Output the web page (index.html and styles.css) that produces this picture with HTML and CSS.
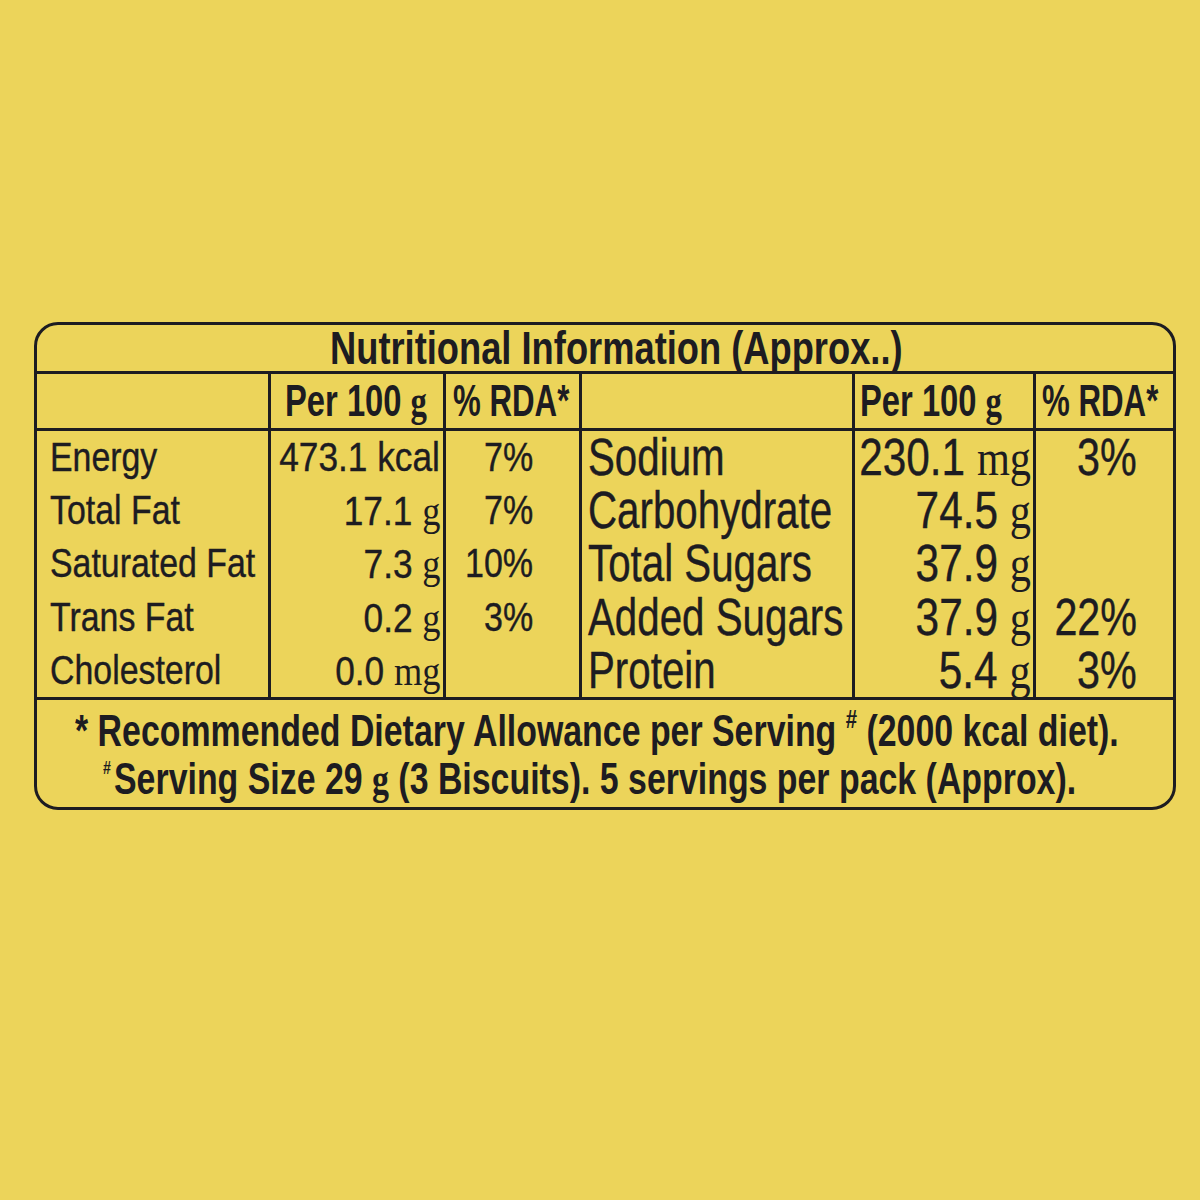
FILE: index.html
```html
<!DOCTYPE html>
<html lang="en">
<head>
<meta charset="utf-8">
<title>Nutritional Information</title>
<link rel="stylesheet" href="styles.css">
</head>
<body>
<div class="page">
  <div class="label">
    <div class="title"><span class="sx tt">Nutritional Information (Approx..)</span></div>
    <div class="grid">
      <div class="h c1"></div>
      <div class="h c2"><span class="sx hp">Per 100 <span class="u">g</span></span></div>
      <div class="h c3"><span class="sx hr">% RDA*</span></div>
      <div class="h c4"></div>
      <div class="h c5"><span class="sx hp">Per 100 <span class="u">g</span></span></div>
      <div class="h c6"><span class="sx hr">% RDA*</span></div>

      <div class="d L c1"><span class="sx">Energy</span></div>
      <div class="d L c2 num"><span class="sx">473.1 kcal</span></div>
      <div class="d L c3 num"><span class="sx">7%</span></div>
      <div class="d R c4"><span class="sx">Sodium</span></div>
      <div class="d R c5 num"><span class="sx">230.1 <span class="u">mg</span></span></div>
      <div class="d R c6 num"><span class="sx">3%</span></div>

      <div class="d L c1"><span class="sx">Total Fat</span></div>
      <div class="d L c2 num"><span class="sx">17.1 <span class="u">g</span></span></div>
      <div class="d L c3 num"><span class="sx">7%</span></div>
      <div class="d R c4"><span class="sx">Carbohydrate</span></div>
      <div class="d R c5 num"><span class="sx">74.5 <span class="u">g</span></span></div>
      <div class="d R c6 num"></div>

      <div class="d L c1"><span class="sx">Saturated Fat</span></div>
      <div class="d L c2 num"><span class="sx">7.3 <span class="u">g</span></span></div>
      <div class="d L c3 num"><span class="sx">10%</span></div>
      <div class="d R c4"><span class="sx">Total Sugars</span></div>
      <div class="d R c5 num"><span class="sx">37.9 <span class="u">g</span></span></div>
      <div class="d R c6 num"></div>

      <div class="d L c1"><span class="sx">Trans Fat</span></div>
      <div class="d L c2 num"><span class="sx">0.2 <span class="u">g</span></span></div>
      <div class="d L c3 num"><span class="sx">3%</span></div>
      <div class="d R c4"><span class="sx">Added Sugars</span></div>
      <div class="d R c5 num"><span class="sx">37.9 <span class="u">g</span></span></div>
      <div class="d R c6 num"><span class="sx">22%</span></div>

      <div class="d L c1"><span class="sx">Cholesterol</span></div>
      <div class="d L c2 num"><span class="sx">0.0 <span class="u">mg</span></span></div>
      <div class="d L c3 num"></div>
      <div class="d R c4"><span class="sx">Protein</span></div>
      <div class="d R c5 num"><span class="sx">5.4 <span class="u">g</span></span></div>
      <div class="d R c6 num"><span class="sx">3%</span></div>
    </div>
    <div class="foot">
      <div class="fl l1"><span class="sx ft">* Recommended Dietary Allowance per Serving <span class="hash">#</span> (2000 kcal diet).</span></div>
      <div class="fl l2"><span class="sx ft"><span class="hash lead">#</span>Serving Size 29 <span class="u">g</span> (3 Biscuits). 5 servings per pack (Approx).</span></div>
    </div>
  </div>
</div>
</body>
</html>
```

FILE: styles.css
```css
html, body {
  margin: 0;
  padding: 0;
}

body {
  width: 1200px;
  height: 1200px;
  background: #ecd45a;
  color: #1d1c21;
  font-family: "Liberation Sans", Arial, sans-serif;
}

.page {
  padding: 322px 0 0 34px;
}

.label {
  width: 1142px;
  height: 488px;
  box-sizing: border-box;
  border: 3px solid #1d1c21;
  border-radius: 24px;
  overflow: hidden;
  display: flex;
  flex-direction: column;
}

.sx {
  display: inline-block;
  white-space: nowrap;
  transform-origin: left center;
}

.u {
  font-family: "Liberation Serif", "Times New Roman", serif;
}

/* title */
.title {
  height: 49px;
  box-sizing: border-box;
  border-bottom: 3px solid #1d1c21;
  display: flex;
  padding-left: 293px;
  font-size: 46px;
  line-height: 46px;
  font-weight: bold;
}

.tt {
  transform: scaleX(0.789);
}

/* grid */
.grid {
  display: grid;
  grid-template-columns: 234px 175px 136px 273px 181px 137px;
  grid-template-rows: 57px repeat(5, 53.2px);
}

.grid > div {
  box-sizing: border-box;
  display: flex;
  white-space: nowrap;
  min-width: 0;
}

.c1, .c2, .c3, .c4, .c5 {
  border-right: 3px solid #1d1c21;
}

.h {
  border-bottom: 3px solid #1d1c21;
  font-size: 44px;
  line-height: 54px;
  font-weight: bold;
}

.h .u {
  font-weight: bold;
}

.h.c2 { padding-left: 14px; }
.h.c3 { padding-left: 7px; }
.h.c5 { padding-left: 5px; }
.h.c6 { padding-left: 6px; }

.hp {
  transform: scaleX(0.744);
}

.hr {
  transform: scaleX(0.71);
}

/* data */
.d {
  line-height: 53.2px;
  -webkit-text-stroke: 0.4px #1d1c21;
}

.d .u {
  -webkit-text-stroke: 0;
}

.L {
  font-size: 41px;
}

.L.c1 .sx {
  transform: scaleX(0.826);
}

.L.c2 .sx {
  transform: scaleX(0.86);
}

.L.c3 .sx {
  transform: scaleX(0.83);
}

.L .u {
  font-size: 1.03em;
}

.R {
  font-size: 51px;
}

.R.c4 .sx {
  transform: scaleX(0.79);
}

.R.c5 .sx {
  transform: scaleX(0.83);
}

.R.c6 .sx {
  transform: scaleX(0.81);
}

.num {
  justify-content: flex-end;
}

.num .sx {
  transform-origin: right center;
}

.d.c1 { padding-left: 13px; }
.d.c2 { padding-right: 3px; }
.d.c3 { padding-right: 46px; }
.d.c4 { padding-left: 6px; }
.d.c5 { padding-right: 2px; }
.d.c6 { padding-right: 36px; }

/* footer */
.foot {
  flex: 1;
  border-top: 3px solid #1d1c21;
  padding-top: 7px;
  font-size: 44px;
  font-weight: bold;
}

.fl {
  display: flex;
  height: 48px;
  line-height: 48px;
}

.l1 { padding-left: 38px; }
.l2 { padding-left: 66px; }

.ft {
  transform: scaleX(0.77);
}

.ft .u {
  font-weight: bold;
}

.hash {
  font-size: 0.6em;
  line-height: 0;
  vertical-align: 0.7em;
}

.hash.lead {
  font-size: 18.5px;
  vertical-align: 20px;
  margin-right: 4px;
}
```
